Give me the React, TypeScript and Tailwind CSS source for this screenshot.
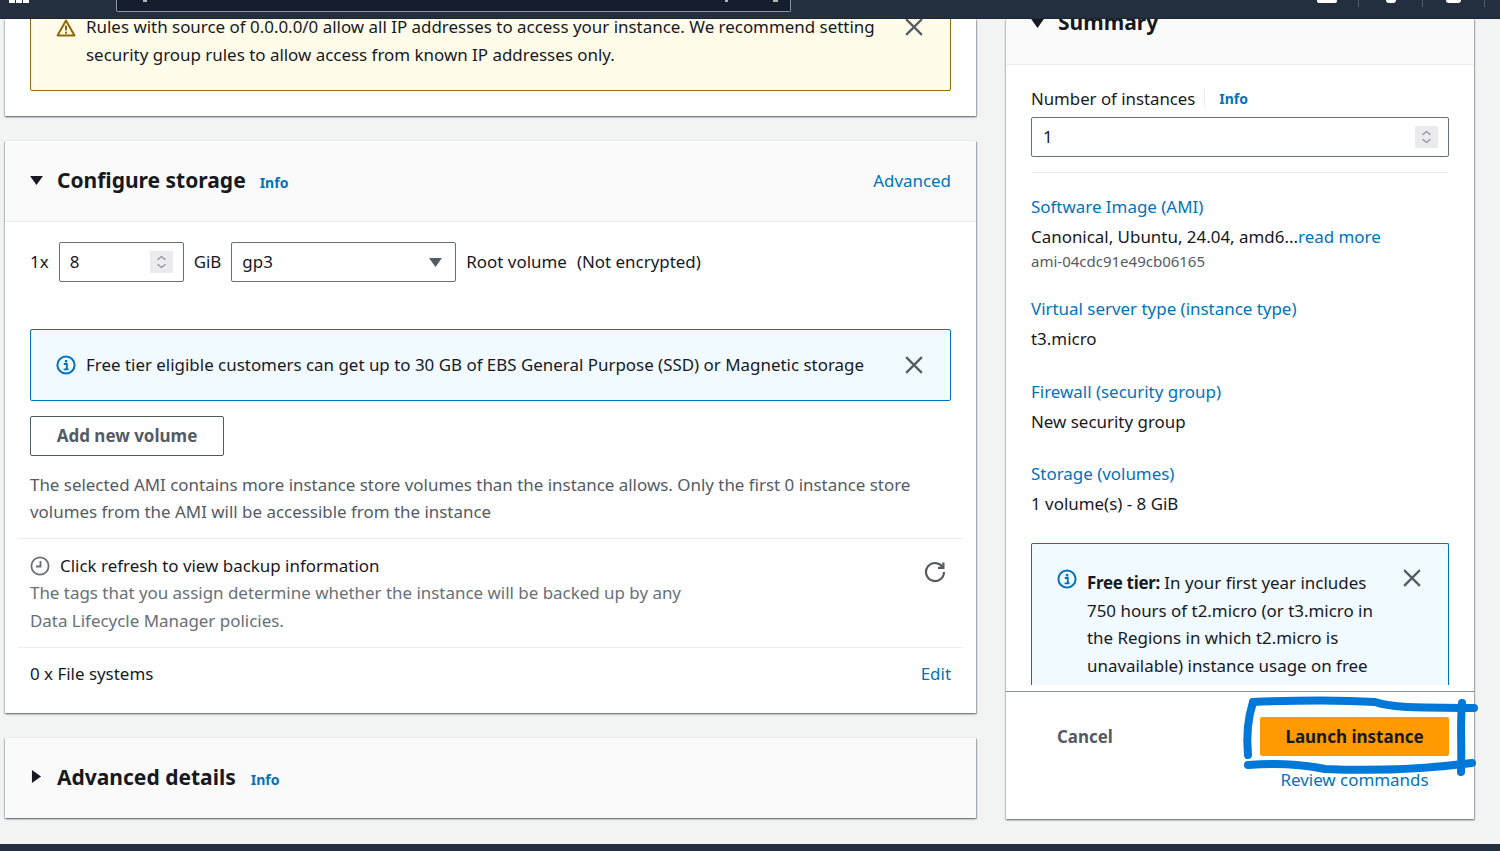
import React from "react";

const ff = { fontFamily: '"Noto Sans", sans-serif' };
const card = "shadow-[0_1px_2px_0_rgba(0,28,36,0.45),1px_1px_1px_0_rgba(0,28,36,0.22),-1px_1px_1px_0_rgba(0,28,36,0.1)]";

function Close({ className = "" }: { className?: string }) {
  return (
    <svg viewBox="0 0 16 16" className={"w-[18px] h-[18px] " + className} fill="none" stroke="#545b64" strokeWidth="2">
      <path d="M1 1l14 14M15 1L1 15" />
    </svg>
  );
}

function InfoIcon({ className = "" }: { className?: string }) {
  return (
    <svg viewBox="0 0 20 20" className={"w-5 h-5 shrink-0 " + className} fill="none">
      <circle cx="10" cy="10" r="8.6" stroke="#0073bb" strokeWidth="2" />
      <rect x="8.9" y="5" width="2.4" height="2.4" fill="#0073bb" />
      <path d="M7.8 9h3v5.2M7.6 14.4h5" stroke="#0073bb" strokeWidth="1.9" />
    </svg>
  );
}

function Spinner() {
  return (
    <div className="w-[23px] h-[22px] bg-[#eaeaef] flex items-center justify-center">
      <svg viewBox="0 0 14 18" className="w-[11px] h-[16px]" fill="none" stroke="#8d9096" strokeWidth="1.6">
        <path d="M2 6l5-4 5 4M2 12l5 4 5-4" />
      </svg>
    </div>
  );
}

function Link({ children, className = "" }: { children: React.ReactNode; className?: string }) {
  return <span className={"text-[#0073bb] " + className}>{children}</span>;
}

function SumItem({ title, children, className = "" }: { title: string; children: React.ReactNode; className?: string }) {
  return (
    <div className={className}>
      <div className="h-[30px] flex items-center text-[#0073bb]">{title}</div>
      <div className="h-[30px] flex items-center">{children}</div>
    </div>
  );
}

export default function App() {
  return (
    <div style={ff} className="relative h-[851px] w-[1500px] overflow-hidden bg-[#f2f3f3] text-[16.93px] leading-[27.5px] text-[#16191f] flex flex-col">
      {/* top nav */}
      <header className="h-[19px] shrink-0 bg-[#232f3e] flex border-b border-[#16191f]/40 overflow-hidden relative z-10">
        <div className="w-[116px] h-full flex items-start pl-[9px]">
          <div className="flex gap-[1px]">
            <i className="block w-[6px] h-[3px] bg-white" />
            <i className="block w-[6px] h-[3px] bg-white" />
            <i className="block w-[6px] h-[3px] bg-white" />
          </div>
        </div>
        <div className="w-[675px] h-[12px] bg-[#161e2d] border border-t-0 border-[#8d99a8] rounded-b-[2px] flex pl-[26px] pr-[12px]">
          <i className="block w-[4px] h-[2px] bg-[#aab7b8]" />
          <i className="block w-[3px] h-[2px] bg-[#aab7b8] ml-auto" />
          <i className="block w-[5px] h-[2px] bg-[#aab7b8] ml-[45px]" />
        </div>
        <div className="flex-1 flex items-start pl-[526px]">
          <i className="block w-[20px] h-[3px] bg-white rounded-b-[2px]" />
          <div className="ml-[21px] w-px h-[7px] bg-[#545b64]" />
          <i className="ml-[27px] block w-[10px] h-[3px] bg-white rounded-b-[3px]" />
          <div className="ml-[26px] w-px h-[7px] bg-[#545b64]" />
          <i className="ml-[23px] block w-[15px] h-[3px] bg-white rounded-b-[4px]" />
          <div className="ml-[23px] w-px h-[7px] bg-[#545b64]" />
        </div>
      </header>

      <main className="flex-1 flex pl-[5px] gap-[30px] min-h-0">
        {/* left column */}
        <div className="w-[971px] flex flex-col gap-[25px]">
          <section className={"h-[97px] bg-white px-[25px] overflow-hidden " + card}>
            <div className="-mt-[10px] h-[82px] bg-[#fffce9] border border-[#9a6b00] rounded-b-[2px] flex pl-[25px] pr-[27px] pt-[3px]">
              <svg viewBox="0 0 20 18" className="w-[20px] h-[18px] mt-[6px] shrink-0" fill="none">
                <path d="M10 1.5L1.5 16.5h17z" stroke="#906806" strokeWidth="2" strokeLinejoin="round" />
                <rect x="9" y="6.5" width="2" height="5" fill="#906806" />
                <rect x="9" y="12.7" width="2" height="2" fill="#906806" />
              </svg>
              <p className="ml-[10px] w-[800px]">
                Rules with source of 0.0.0.0/0 allow all IP addresses to access your instance. We recommend setting security group rules to allow access from known IP addresses only.
              </p>
              <Close className="ml-auto mt-[5px]" />
            </div>
          </section>

          <section className={"h-[572px] bg-white " + card}>
            <div className="h-[81px] bg-[#fafafa] border-b border-[#eaeded] flex items-center pl-[25px] pr-[25px]">
              <svg viewBox="0 0 14 12" className="w-[13px] h-[11px] shrink-0 -mt-[2px]"><path d="M0 1h14L7 11z" fill="#16191f" /></svg>
              <h2 className="ml-[14px] text-[21px] font-bold -mt-[1px]">Configure storage</h2>
              <Link className="ml-[14px] mt-[4px] text-[14px] font-bold">Info</Link>
              <Link className="ml-auto">Advanced</Link>
            </div>

            <div className="h-[40px] mt-[20px] ml-[25px] flex items-center">
              <span className="-mt-[1px]">1x</span>
              <div className="ml-[10px] w-[125px] h-full border border-[#687078] rounded-[2px] flex items-center pl-[10px] pr-[10px] justify-between">
                <span>8</span>
                <Spinner />
              </div>
              <span className="ml-[10px] -mt-[1px]">GiB</span>
              <div className="ml-[10px] w-[225px] h-full border border-[#687078] rounded-[2px] flex items-center pl-[10px] pr-[13px] justify-between">
                <span>gp3</span>
                <svg viewBox="0 0 14 12" className="w-[13px] h-[11px]"><path d="M0 1h14L7 11z" fill="#545b64" /></svg>
              </div>
              <span className="ml-[10px] -mt-[1px]">Root volume</span>
              <span className="ml-[10px] -mt-[1px]">(Not encrypted)</span>
            </div>

            <div className="mt-[47px] mx-[25px] h-[72px] bg-[#f1faff] border border-[#0073bb] rounded-[2px] flex items-center pl-[25px] pr-[27px]">
              <InfoIcon />
              <span className="ml-[10px]">Free tier eligible customers can get up to 30 GB of EBS General Purpose (SSD) or Magnetic storage</span>
              <Close className="ml-auto" />
            </div>

            <div className="mt-[15px] ml-[25px] w-[194px] h-[40px] border border-[#545b64] rounded-[2px] flex items-center justify-center font-bold text-[#545b64] text-[17px]">
              Add new volume
            </div>

            <p className="mt-[15px] mx-[25px] text-[#545b64] leading-[27px]">
              The selected AMI contains more instance store volumes than the instance allows. Only the first 0 instance store volumes from the AMI will be accessible from the instance
            </p>

            <div className="mt-[13px] mx-[13px] border-t border-[#eaeded] h-[109px] pl-[12px] pr-[17px] pt-[13px] flex justify-between">
              <div>
                <div className="flex items-center">
                  <svg viewBox="0 0 20 20" className="w-5 h-5" fill="none" stroke="#687078" strokeWidth="1.8">
                    <circle cx="10" cy="10" r="8.6" />
                    <path d="M10.5 5v5.5H6" />
                  </svg>
                  <span className="ml-[10px]">Click refresh to view backup information</span>
                </div>
                <p className="text-[#687078] w-[680px] -mt-[1px] leading-[28px]">
                  The tags that you assign determine whether the instance will be backed up by any Data Lifecycle Manager policies.
                </p>
              </div>
              <svg viewBox="0 0 22 22" className="w-[22px] h-[22px] mt-[9px]" fill="none" stroke="#545b64" strokeWidth="2.2">
                <path d="M18.6 6.2A9 9 0 1 0 20 11" />
                <path d="M19.4 1.4v5.4h-5.4" />
              </svg>
            </div>

            <div className="mx-[13px] border-t border-[#eaeded] h-[52px] pl-[12px] pr-[12px] flex items-center justify-between">
              <span>0 x File systems</span>
              <Link>Edit</Link>
            </div>
          </section>

          <section className={"h-[80px] bg-[#fafafa] flex items-center pl-[26px] " + card}>
            <svg viewBox="0 0 12 14" className="w-[11px] h-[13px] shrink-0 -mt-[4px]"><path d="M1 0l10 7-10 7z" fill="#16191f" /></svg>
            <h2 className="ml-[15px] text-[21px] font-bold">Advanced details</h2>
            <Link className="ml-[15px] mt-[4px] text-[14px] font-bold">Info</Link>
          </section>
        </div>

        {/* right column */}
        <aside className={"w-[468px] h-[800px] bg-white flex flex-col " + card}>
          <div className="h-[46px] shrink-0 bg-[#fafafa] border-b border-[#eaeded] pl-[25px] overflow-hidden">
            <div className="flex items-center -mt-[10px] h-[27px]">
              <svg viewBox="0 0 14 12" className="w-[13px] h-[11px] shrink-0 mt-[2px]"><path d="M0 1h14L7 11z" fill="#16191f" /></svg>
              <h2 className="ml-[14px] text-[21px] font-bold -mt-[0px]">Summary</h2>
            </div>
          </div>

          <div className="h-[626px] shrink-0 px-[25px] pt-[20px]">
            <div className="flex items-center h-[27px]">
              <span className="pr-[9px] border-r border-[#eaeded] leading-[20px] text-[16.8px]">Number of instances</span>
              <Link className="ml-[14px] text-[14px] font-bold">Info</Link>
            </div>
            <div className="mt-[5px] h-[40px] border border-[#687078] rounded-[2px] flex items-center justify-between pl-[11px] pr-[10px]">
              <span>1</span>
              <Spinner />
            </div>
            <div className="mt-[15px] border-t border-[#eaeded]" />
            <div className="mt-[19px]">
              <div className="h-[30px] flex items-center text-[#0073bb]">Software Image (AMI)</div>
              <div className="h-[30px] flex items-center whitespace-pre">
                Canonical, Ubuntu, 24.04, amd6...<Link>read more</Link>
              </div>
              <div className="h-[20px] flex items-center text-[15px] text-[#545b64]">ami-04cdc91e49cb06165</div>
            </div>
            <SumItem title="Virtual server type (instance type)" className="mt-[22px]">t3.micro</SumItem>
            <SumItem title="Firewall (security group)" className="mt-[23px]">New security group</SumItem>
            <SumItem title="Storage (volumes)" className="mt-[22px]">1 volume(s) - 8 GiB</SumItem>
            <div className="mt-[24px] h-[142px] overflow-hidden bg-[#f1faff] border border-b-0 border-[#0073bb] rounded-t-[2px] flex pl-[25px] pr-[27px] pt-[25px]">
              <InfoIcon />
              <p className="ml-[10px] w-[290px]">
                <b className="tracking-[-0.3px]">Free tier:</b> In your first year includes 750 hours of t2.micro (or t3.micro in the Regions in which t2.micro is unavailable) instance usage on free
              </p>
              <Close className="ml-auto" />
            </div>
          </div>

          <div className="flex-1 border-t border-[#879596] pl-[51px] pr-[25px] flex justify-between">
            <span className="mt-[31px] font-bold text-[#545b64]">Cancel</span>
            <div className="flex flex-col items-center mt-[25px]">
              <div className="w-[189px] h-[39px] bg-[#ff9900] rounded-[2px] flex items-center justify-center font-bold text-[17px]">Launch instance</div>
              <Link className="mt-[10px]">Review commands</Link>
            </div>
          </div>
        </aside>
      </main>

      <footer className="h-[7px] shrink-0 bg-[#232f3e]" />

      {/* hand-drawn highlight around the button */}
      <svg className="absolute left-[1240px] top-[690px] w-[245px] h-[90px] pointer-events-none" viewBox="0 0 245 90" fill="none" stroke="#0078d7" strokeWidth="8" strokeLinecap="round" strokeLinejoin="round">
        <path d="M8 65C6 45 8 28 13 12" />
        <path d="M13 12C60 10 105 10 135 12C155 19 190 17 234 18" />
        <path d="M222 13C220 35 222 60 221 82" />
        <path d="M8 75C35 73 60 74 85 79C130 81 185 79 232 73" />
      </svg>
    </div>
  );
}
